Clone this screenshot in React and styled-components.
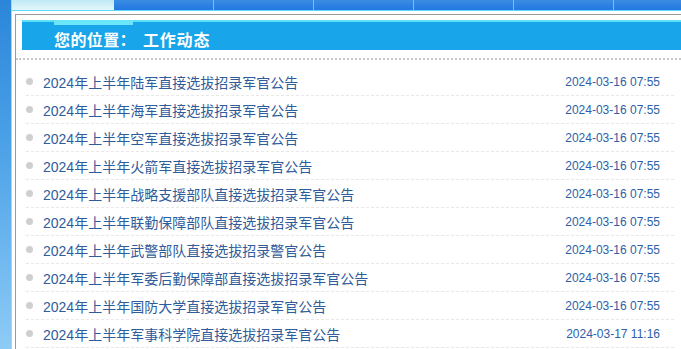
import styled, { createGlobalStyle } from "styled-components";

const GlobalStyle = createGlobalStyle`
  html, body {
    margin: 0;
    padding: 0;
    background: #fff;
    overflow: hidden;
  }
  body {
    font-family: "Liberation Sans", "Noto Sans CJK SC", sans-serif;
  }
`;

const items = [
  { title: "2024年上半年陆军直接选拔招录军官公告", date: "2024-03-16 07:55" },
  { title: "2024年上半年海军直接选拔招录军官公告", date: "2024-03-16 07:55" },
  { title: "2024年上半年空军直接选拔招录军官公告", date: "2024-03-16 07:55" },
  { title: "2024年上半年火箭军直接选拔招录军官公告", date: "2024-03-16 07:55" },
  { title: "2024年上半年战略支援部队直接选拔招录军官公告", date: "2024-03-16 07:55" },
  { title: "2024年上半年联勤保障部队直接选拔招录军官公告", date: "2024-03-16 07:55" },
  { title: "2024年上半年武警部队直接选拔招录警官公告", date: "2024-03-16 07:55" },
  { title: "2024年上半年军委后勤保障部直接选拔招录军官公告", date: "2024-03-16 07:55" },
  { title: "2024年上半年国防大学直接选拔招录军官公告", date: "2024-03-16 07:55" },
  { title: "2024年上半年军事科学院直接选拔招录军官公告", date: "2024-03-17 11:16" },
];

const App = () => {
  return (
    <>
      <GlobalStyle />
      <Page>
        <SideStrip />
        <Main>
          <TabBar>
            <Tab $active />
            <Tab />
            <Tab />
            <Tab />
            <Tab />
            <Tab />
            <Tab />
          </TabBar>
          <Content>
            <Box>
              <Location>
                <span className="mark" />
                <h2>
                  您的位置：<span className="here">工作动态</span>
                </h2>
              </Location>
              <Dotted />
              <NewsList>
                {items.map((item, i) => (
                  <NewsItem key={i}>
                    <Dot />
                    <a href="#">{item.title}</a>
                    <time>{item.date}</time>
                  </NewsItem>
                ))}
              </NewsList>
            </Box>
          </Content>
        </Main>
      </Page>
    </>
  );
};

export default App;

const Page = styled.div`
  display: flex;
  width: 681px;
  height: 349px;
  overflow: hidden;
`;

const SideStrip = styled.div`
  width: 11px;
  flex-shrink: 0;
  background: linear-gradient(to bottom, #2b86d9 0%, #4fa4e8 45%, #8ecbf6 100%);
  border-right: 1px solid #9ed6f6;
`;

const Main = styled.div`
  flex: 1;
  min-width: 0;
  overflow: hidden;
`;

const TabBar = styled.div`
  display: flex;
  height: 10px;
  border-bottom: 1px solid #5cd9f7;
`;

const Tab = styled.div`
  width: ${({ $active }) => ($active ? "102px" : "99px")};
  flex-shrink: 0;
  border-right: ${({ $active }) => ($active ? "none" : "1px solid #5fcdf5")};
  background: ${({ $active }) =>
    $active
      ? "linear-gradient(to bottom, #bfe9f6, #e3f7fb)"
      : "linear-gradient(to bottom, #3a8ce2, #2378e2)"};
`;

const Content = styled.div`
  padding: 3px 0 0 3px;
  margin-right: -12px;
`;

const Box = styled.div`
  border: 1px solid #9a9a9a;
  padding-top: 5px;
  padding-bottom: 20px;
`;

const Location = styled.div`
  position: relative;
  margin-left: 6px;
  height: 28px;
  border-top: 2px solid #5ddff7;
  background: #18a5e9;
  padding-left: 32px;

  .mark {
    position: absolute;
    left: 32px;
    top: -2px;
    width: 79px;
    height: 5px;
    background: #6be5f8;
  }

  h2 {
    margin: 0;
    font-size: 16px;
    font-weight: bold;
    color: #fff;
    line-height: 37px;
    letter-spacing: 0.4px;
    font-family: "Liberation Sans", "Noto Sans CJK SC", sans-serif;
  }

  .here {
    margin-left: 7px;
    letter-spacing: 0.8px;
  }
`;

const Dotted = styled.div`
  margin-top: 8px;
  border-top: 2px dotted #c8c8c8;
`;

const NewsList = styled.ul`
  list-style: none;
  margin: 8px 0 0 0;
  padding: 0;
`;

const NewsItem = styled.li`
  display: flex;
  align-items: center;
  height: 27px;
  margin: 0 18px 0 10px;
  padding-right: 14px;
  border-bottom: 1px dashed #e8e8e8;

  a {
    flex: 1;
    margin-left: 10px;
    font-size: 14px;
    color: #2f5c9b;
    text-decoration: none;
  }

  time {
    font-size: 12px;
    color: #2d60a8;
  }
`;

const Dot = styled.span`
  width: 7px;
  height: 7px;
  border-radius: 50%;
  background: #cfcfcf;
  flex-shrink: 0;
`;
